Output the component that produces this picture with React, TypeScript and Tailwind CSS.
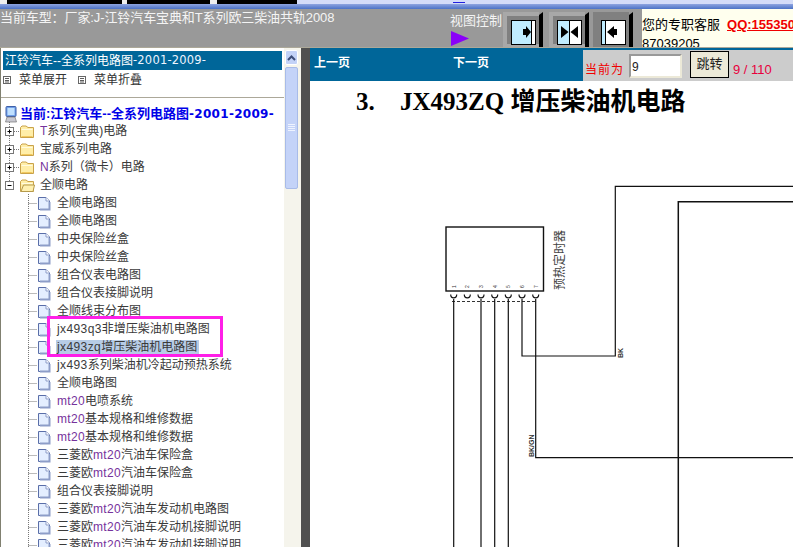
const cjk = '"Liberation Sans", "Noto Sans CJK SC", sans-serif';

const docsTop: string[] = ['全顺电路图', '全顺电路图', '中央保险丝盒', '中央保险丝盒', '组合仪表电路图', '组合仪表接脚说明', '全顺线束分布图'];
const docsBottom: string[] = [
  'jx493系列柴油机冷起动预热系统',
  '全顺电路图',
  'mt20电喷系统',
  'mt20基本规格和维修数据',
  'mt20基本规格和维修数据',
  '三菱欧mt20汽油车保险盒',
  '三菱欧mt20汽油车保险盒',
  '组合仪表接脚说明',
  '三菱欧mt20汽油车发动机电路图',
  '三菱欧mt20汽油车发动机接脚说明',
  '三菱欧mt20汽油车发动机接脚说明',
];

const Label = ({ text }: { text: string }) => {
  const parts = text.split(/(mt20|jx493\w*)/);
  return (
    <span className="whitespace-nowrap">
      {parts.map((p, i) =>
        p === 'mt20' ? (
          <span key={i} className="text-[#76329c] tracking-[0.3px]">
            {p}
          </span>
        ) : p.startsWith('jx493') ? (
          <span key={i} className="tracking-[0.4px]">
            {p}
          </span>
        ) : (
          <span key={i}>{p}</span>
        )
      )}
    </span>
  );
};

const DocIcon = () => (
  <svg width="50" height="18" className="shrink-0">
    <path d="M27.5 0V18M27.5 9.5H36" stroke="#777" strokeDasharray="1 1" fill="none" />
    <path d="M37.5 3.5H45L48.5 7V15.5H37.5Z" fill="#e4eeff" stroke="#5a6ea8" />
    <path d="M39 15.5H48.5V8" fill="none" stroke="#8d9dc8" strokeWidth="2" />
    <path d="M45 3.5V7H48.5" fill="#fff" stroke="#8d9dc8" />
  </svg>
);

const DocRow = ({ text }: { text: string }) => (
  <div className="flex h-[18px] items-center">
    <DocIcon />
    <div className="ml-[6px]">
      <Label text={text} />
    </div>
  </div>
);

const FolderRow = ({ text, open, purple }: { text: string; open?: boolean; purple?: string }) => (
  <div className="flex h-[18px] items-center">
    <svg width="34" height="18" className="shrink-0">
      <path d={open ? 'M8.5 0V5' : 'M8.5 0V18M13 9.5H19'} stroke="#777" strokeDasharray="1 1" fill="none" />
      <rect x="4.5" y="5.5" width="8" height="8" fill="#fff" stroke="#777" />
      <path d={open ? 'M6.5 9.5H10.5' : 'M6.5 9.5H10.5M8.5 7.5V11.5'} stroke="#000" />
      <path d="M19.5 15.5V5.5L21 4H25L27 5.5H32.5V15.5Z" fill="#ffeea8" stroke="#c9a24a" />
      <path d="M20.5 7.5H31.5" stroke="#fffbe0" />
      <path d="M20.5 14.5H31.5" stroke="#f2c95e" />
      {open && <path d="M20 15.5L22.5 9H33.5L32 15.5Z" fill="#fff0b0" stroke="#b59a4c" />}
    </svg>
    <div className="ml-[5px] whitespace-nowrap">
      {purple && <span className="text-[#76329c]">{purple}</span>}
      {text}
    </div>
  </div>
);

const MenuIcon = () => (
  <svg width="8" height="8" className="shrink-0">
    <rect x="0.5" y="0.5" width="7" height="7" fill="#fff" stroke="#666" />
    <path d="M2 2.5H6M2 4.5H6M2 6H6" stroke="#333" strokeWidth="0.8" />
  </svg>
);

const ViewButton = ({ mode }: { mode: 'left' | 'both' | 'right' }) => {
  const split = mode === 'left' ? 20 : mode === 'both' ? 12 : 4;
  return (
    <svg width="40" height="35" className="shrink-0">
      <rect x="0" y="0" width="36" height="35" fill={mode === 'right' ? '#808080' : '#a8a8a8'} />
      <rect x="4" y="4" width="32" height="28" fill="#808080" />
      <path d="M36 3L40 0V35H36Z" fill="#000" />
      <rect x="8.5" y="8.5" width="24" height="24" fill="#fff" stroke="#000" />
      <rect x="9" y="9" width={split - 1} height="23" fill="#c0ecff" />
      <path d={`M${8.5 + split} 8.5V32.5`} stroke="#000" />
      {mode === 'left' && <path d="M20 17H23V14L28 20L23 26V23H20Z" fill="#000" />}
      {mode === 'both' && <path d="M12 14L19.5 20L12 26ZM29 14L21.5 20L29 26Z" fill="#000" />}
      {mode === 'right' && <path d="M21 14V17H24V23H21V26L14 20Z" fill="#000" />}
    </svg>
  );
};

const Diagram = () => (
  <svg width="483" height="427" className="block shrink-0">
    <g transform="translate(-310 -120)" fill="none" stroke="#111">
      <rect x="446" y="226" width="97.5" height="64" strokeWidth="1.4" />
      {[453.7, 467.3, 481, 494.7, 508.3, 522, 535.7].map((x) => (
        <path key={x} d={`M${x - 3} 293.5C${x - 3} 298 ${x + 3} 298 ${x + 3} 293.5`} strokeWidth="1.2" />
      ))}
      <path d="M452 300.5H537" stroke="#333" strokeWidth="1.2" strokeDasharray="3 2" />
      <path
        d="M453.7 298V547M481 298V547M494.7 298V547M508.3 298V547M522 298V355H615.3V185.3H793M535.7 298V456.7H793"
        strokeWidth="1.2"
      />
      <path d="M678.3 547V200.7H793" strokeWidth="1.5" />
      <g fill="#333" stroke="none" fontSize="5" fontFamily='"Liberation Sans", sans-serif'>
        {['1', '2', '3', '4', '5', '6', '7'].map((n, i) => (
          <text key={n} transform={`translate(${455.5 + i * 13.7} 287) rotate(-90)`}>
            {n}
          </text>
        ))}
        <text transform="translate(623 357) rotate(-90)" fontSize="7" fontWeight="bold">
          BK
        </text>
        <text transform="translate(534 456) rotate(-90)" fontSize="7" fontWeight="bold">
          BK/GN
        </text>
      </g>
      <text
        transform="translate(564 289) rotate(-90)"
        fill="#444"
        stroke="none"
        fontSize="12"
        style={{ fontFamily: cjk }}
      >
        预热定时器
      </text>
    </g>
  </svg>
);

export default function App() {
  return (
    <div className="flex h-[547px] w-[793px] flex-col overflow-hidden bg-white text-[12px] text-[#3a3a3a]" style={{ fontFamily: cjk }}>
      {/* browser strip */}
      <div className="flex h-[4px] bg-[#d4dcf8]">
        <div className="w-[7px] bg-[#eeeeee]" />
        <div className="w-[115px] bg-black" />
        <div className="w-[5px] bg-[#eeeeee]" />
        <div className="w-[83px] bg-black" />
        <div className="w-[7px] bg-[#eeeeee]" />
        <div className="w-[80px] bg-black" />
        <div className="ml-[156px] mt-[2px] h-[1px] w-[12px] bg-[#2020e0]" />
      </div>
      <div className="h-[5px] bg-gradient-to-b from-[#8ea4e0] to-[#4c72c6]" />

      {/* header */}
      <div className="flex h-[38px] bg-[#999999]">
        <div className="w-[450px] pt-[1px] text-[13px] leading-[15px] tracking-[-0.1px] text-[#f4f4f4]">当前车型：厂家:J-江铃汽车宝典和T系列欧三柴油共轨2008</div>
        <div className="w-[53px] pt-[4px] text-[13px] leading-[15px] text-[#f4f4f4] whitespace-nowrap">
          视图控制
          <svg width="18" height="15" className="mt-[3px] ml-[1px] block">
            <path d="M0 0L18 7.5L0 15Z" fill="#8a00f8" />
          </svg>
        </div>
        <div className="flex h-[35px] w-[139px] gap-[6px] self-end">
          <ViewButton mode="left" />
          <div className="flex gap-[4px]">
            <ViewButton mode="both" />
            <ViewButton mode="right" />
          </div>
        </div>
        <div className="flex-1 overflow-hidden bg-[#ffffee] text-[13px] leading-[15px] text-black whitespace-nowrap">
          <div className="mt-[8px] flex">
            <span>您的专职客服</span>
            <span className="ml-[7px] font-bold text-[#f00000] underline">QQ:155350</span>
          </div>
          <div className="mt-[4px]">87039205</div>
        </div>
      </div>

      <div className="flex min-h-0 flex-1 border-t border-[#aca899]">
        {/* tree panel */}
        <div className="w-[284px] shrink-0 overflow-hidden border-l border-[#808070] bg-white">
          <div className="mx-[2px] mt-[3px] flex h-[19px] items-center bg-[#006699] pl-[2px] text-white whitespace-nowrap">
            江铃汽车--全系列电路图<span className="font-['DejaVu_Sans'] text-[11.5px] tracking-[0.2px] text-[#eef4ff]">-2001-2009-</span>
          </div>
          <div className="flex h-[19px] items-center pl-[2px] text-[#333]">
            <MenuIcon />
            <span className="ml-[8px]">菜单展开</span>
            <span className="ml-[11px]"><MenuIcon /></span>
            <span className="ml-[8px]">菜单折叠</span>
          </div>
          <div className="mt-[8px] h-[1px] bg-[#aca899]" />
          <div className="mt-[7px] flex h-[18px] items-center pl-[3px] text-[13px] font-bold text-[#0000e8] whitespace-nowrap">
            <svg width="13" height="17" className="shrink-0">
              <rect x="2" y="0.5" width="10" height="10" rx="1" fill="#6f9fe8" stroke="#3e5fa8" />
              <rect x="3.5" y="2" width="7" height="7" fill="#bfe0ff" />
              <path d="M3 11H11L12.5 16H1.5Z" fill="#c8c8d0" stroke="#777" strokeWidth="0.7" />
            </svg>
            <span className="ml-[3px]">当前:江铃汽车--全系列电路图</span>
            <span className="font-['DejaVu_Sans'] text-[12px] tracking-[0.3px]">-2001-2009-</span>
          </div>
          <div className="mt-[-1px] text-[12px] leading-[18px]">
            <FolderRow purple="T" text="系列(宝典)电路" />
            <FolderRow text="宝威系列电路" />
            <FolderRow purple="N" text="系列（微卡）电路" />
            <FolderRow text="全顺电路" open />
            {docsTop.map((d, i) => (
              <DocRow key={i} text={d} />
            ))}
            <div className="relative">
              <DocRow text="jx493q3非增压柴油机电路图" />
              <div className="flex h-[18px] items-center">
                <DocIcon />
                <div className="ml-[5px] flex h-[15px] items-center bg-[#b7cce6] pl-[1px] pr-[2px] whitespace-nowrap">
                  <span className="tracking-[0.4px]">jx493zq</span>增压柴油机电路图
                </div>
              </div>
              <div className="absolute left-[46px] top-[-4px] h-[41px] w-[176px] border-[3px] border-[#ff1fe8]" />
            </div>
            {docsBottom.map((d, i) => (
              <DocRow key={i} text={d} />
            ))}
          </div>
        </div>

        {/* scrollbar */}
        <div className="flex w-[17px] shrink-0 flex-col bg-[#f5f4ec] pl-[1px] pr-[3px] pt-[2px]">
          <div className="flex h-[15px] items-center justify-center rounded-[2px] border border-white bg-[#c3d2f7]">
            <svg width="9" height="6">
              <path d="M1 5L4.5 1.5L8 5" fill="none" stroke="#3d4d78" strokeWidth="2" />
            </svg>
          </div>
          <div className="mt-[2px] flex h-[122px] items-center justify-center rounded-[2px] border border-[#a8bbe8] bg-[#c4d3f8]">
            <svg width="7" height="8">
              <path d="M0 .5H7M0 2.5H7M0 4.5H7M0 6.5H7" stroke="#eef3ff" />
            </svg>
          </div>
        </div>

        <div className="w-[9px] shrink-0 bg-[#505050]" />

        {/* page panel */}
        <div className="flex min-w-0 flex-1 flex-col overflow-hidden">
          <div className="flex h-[33px] shrink-0 bg-[#006699] font-bold text-white">
            <div className="w-[143px] pl-[4px] pt-[6px]">上一页</div>
            <div className="w-[130px] pt-[6px]">下一页</div>
            <div className="mt-[2px] flex flex-1 items-start bg-[#cccccc] font-normal">
              <span className="ml-[2px] mt-[11px] text-[12px] tracking-[1px] text-[#f00000]">当前为</span>
              <div className="ml-[5px] mt-[4px] h-[24px] w-[53px] border-2 border-[#ece9d8] border-t-[#999] border-l-[#999] bg-white pl-[1px] pt-[2px] text-[12px] text-[#222]">9</div>
              <div className="ml-[8px] mt-[1px] flex h-[27px] w-[39px] items-start justify-center border border-black bg-[#ece9d8] pt-[2px] text-[13px] text-[#222]">跳转</div>
              <span className="ml-[4px] mt-[10px] text-[13px] text-[#e8003c] whitespace-nowrap">9 / 110</span>
            </div>
          </div>
          <h1 className="flex h-[40px] shrink-0 items-center pl-[46px] text-[25px] font-bold leading-none text-black whitespace-nowrap" style={{ fontFamily: '"Liberation Serif", "Noto Sans CJK SC", serif' }}>
            <span className="w-[44px]">3.</span>
            <span>JX493ZQ 增压柴油机电路</span>
          </h1>
          <Diagram />
        </div>
      </div>
    </div>
  );
}
